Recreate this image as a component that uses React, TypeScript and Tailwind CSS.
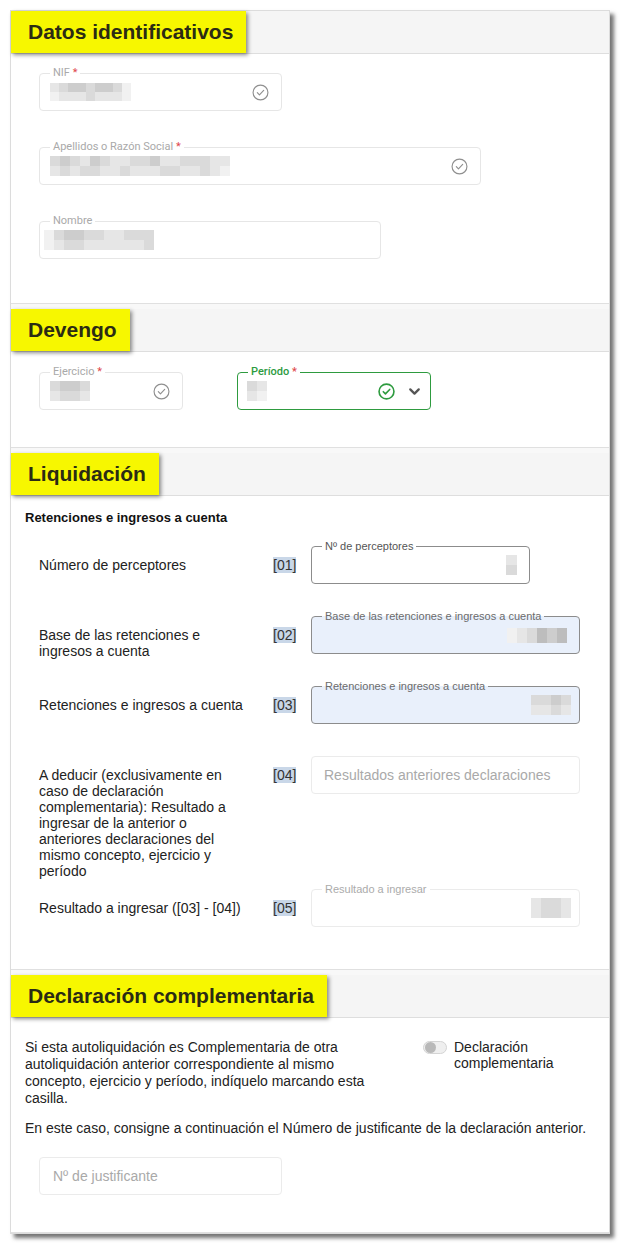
import { ChevronDown } from "lucide-react";
import type { ReactNode } from "react";

type Tone = "muted" | "dark" | "blue" | "faint" | "green";

const toneBox: Record<Tone, string> = {
  muted: "border border-[#e6e6e6] bg-white",
  dark: "border border-[#8c8c8c] bg-white",
  blue: "border border-[#8c8c8c] bg-[#e9f0fb]",
  faint: "border border-[#ebebeb] bg-white",
  green: "border-[1.5px] border-[#2e9b3f] bg-white",
};

const toneLabel: Record<Tone, string> = {
  muted: "text-[#a9a9a9] bg-white font-['Roboto',sans-serif]",
  dark: "text-[#555555] bg-white",
  blue: "text-[#6b6b6b] bg-[linear-gradient(to_bottom,#ffffff_50%,#e9f0fb_50%)]",
  faint: "text-[#ababab] bg-white",
  green: "text-[#2e9b3f] bg-white font-medium font-['Roboto',sans-serif]",
};

const shade: Record<string, string> = {
  "0": "bg-transparent",
  "1": "bg-[#f1f1f1]",
  "2": "bg-[#e6e6e6]",
  "3": "bg-[#dadada]",
  "4": "bg-[#cdcdcd]",
  "5": "bg-[#bdbdbd]",
};

// blurred (pixelated) values from the screenshot
function Pixels({ rows, cell }: { rows: string[]; cell: string }) {
  return (
    <div className="flex flex-col">
      {rows.map((r, i) => (
        <div key={i} className="flex">
          {r.split("").map((c, j) => (
            <div key={j} className={`${cell} ${shade[c]}`} />
          ))}
        </div>
      ))}
    </div>
  );
}

function CheckCircle({ green }: { green?: boolean }) {
  return (
    <svg
      width="17"
      height="17"
      viewBox="0 0 24 24"
      fill="none"
      stroke={green ? "#2e9b3f" : "#8f8f8f"}
      strokeWidth={green ? 2.3 : 1.6}
      strokeLinecap="round"
      strokeLinejoin="round"
    >
      <circle cx="12" cy="12" r="10.5" />
      <path d="M7.5 12.3l3 3 6-6.2" />
    </svg>
  );
}

function Field({
  label,
  req,
  tone,
  className,
  inner = "px-[10px]",
  children,
}: {
  label?: string;
  req?: boolean;
  tone: Tone;
  className: string;
  inner?: string;
  children?: ReactNode;
}) {
  return (
    <div className={`relative h-[38px] rounded-[4px] ${toneBox[tone]} ${className}`}>
      {label && (
        <span
          className={`absolute left-[10px] top-[-7px] whitespace-nowrap px-[3px] text-[11px] leading-[12px] ${toneLabel[tone]}`}
        >
          {label}
          {req && <span className="text-[#e0474c]"> *</span>}
        </span>
      )}
      <div className={`flex h-full items-center ${inner}`}>{children}</div>
    </div>
  );
}

function Section({ title, children }: { title: string; children: ReactNode }) {
  return (
    <section className="border-b border-[#e0e0e0] bg-white">
      <header className="flex h-[43px] border-b border-[#dedede] bg-[#f5f5f5]">
        <div className="flex h-[42px] items-center bg-[#f7f700] pl-[17px] pr-[13px] text-[21px] font-bold text-[#2b2b14] shadow-[2px_2px_4px_rgba(0,0,0,0.45)]">
          {title}
        </div>
      </header>
      {children}
    </section>
  );
}

function Row({ label, code, children }: { label: ReactNode; code: string; children: ReactNode }) {
  return (
    <div className="flex items-start">
      <div className="w-[208px] pb-[10px] pt-[11px] text-[14px] leading-[16px] text-[#222]">{label}</div>
      <div className="ml-[26px] w-[38px] pt-[11px] text-[14px] leading-[16px]">
        <span className="bg-[#c9d7e8] text-[#333]">[{code}]</span>
      </div>
      <div className="mb-[32px]">{children}</div>
    </div>
  );
}

export default function App() {
  return (
    <div className="min-h-[1243px] bg-white pl-[10px] pt-[10px] font-['Liberation_Sans',Arial,sans-serif]">
      <div className="flex w-[600px] flex-col gap-[5px] border border-[#dcdcdc] bg-[#f8f8f8] shadow-[4px_4px_4px_rgba(0,0,0,0.55)]">
        <Section title="Datos identificativos">
          <div className="flex flex-col gap-[36px] pb-[44px] pl-[28px] pt-[19px]">
            <Field label="NIF" req tone="muted" className="w-[243px]">
              <Pixels rows={["234434431", "122232221"]} cell="w-[9px] h-[9px]" />
              <div className="ml-auto mr-[2px]">
                <CheckCircle />
              </div>
            </Field>
            <Field label="Apellidos o Razón Social" req tone="muted" className="w-[442px]">
              <Pixels rows={["343243223342233322", "232332232223322321"]} cell="w-[10px] h-[10px]" />
              <div className="ml-auto mr-[2px]">
                <CheckCircle />
              </div>
            </Field>
            <Field label="Nombre" tone="muted" className="w-[342px]" inner="px-[4px]">
              <Pixels rows={["13443322333", "12332222223"]} cell="w-[10px] h-[10px]" />
            </Field>
          </div>
        </Section>

        <Section title="Devengo">
          <div className="flex pb-[37px] pl-[28px] pt-[20px]">
            <Field label="Ejercicio" req tone="muted" className="w-[144px]">
              <Pixels rows={["3443", "2332"]} cell="w-[10px] h-[10px]" />
              <div className="ml-auto mr-[2px]">
                <CheckCircle />
              </div>
            </Field>
            <Field label="Período" req tone="green" className="ml-[54px] w-[194px]" inner="pl-[9px] pr-[7px]">
              <Pixels rows={["32", "21"]} cell="w-[10px] h-[10px]" />
              <div className="ml-auto">
                <CheckCircle green />
              </div>
              <ChevronDown size={17} strokeWidth={3.2} className="ml-[11px] text-[#555]" />
            </Field>
          </div>
        </Section>

        <Section title="Liquidación">
          <div className="pb-[10px] pl-[14px] pt-[14px]">
            <h4 className="text-[13px] font-bold leading-[16px] text-[#111]">Retenciones e ingresos a cuenta</h4>
            <div className="ml-[14px] mt-[20px] flex flex-col">
              <Row label="Número de perceptores" code="01">
                <Field label="Nº de perceptores" tone="dark" className="w-[219px]" inner="justify-end pr-[12px]">
                  <Pixels rows={["2", "3"]} cell="w-[11px] h-[10px]" />
                </Field>
              </Row>
              <Row label="Base de las retenciones e ingresos a cuenta" code="02">
                <Field
                  label="Base de las retenciones e ingresos a cuenta"
                  tone="blue"
                  className="w-[269px]"
                  inner="justify-end pr-[12px]"
                >
                  <Pixels rows={["123545"]} cell="w-[10px] h-[15px]" />
                </Field>
              </Row>
              <Row label="Retenciones e ingresos a cuenta" code="03">
                <Field label="Retenciones e ingresos a cuenta" tone="blue" className="w-[269px]" inner="justify-end pr-[8px]">
                  <Pixels rows={["3343", "2232"]} cell="w-[10px] h-[10px]" />
                </Field>
              </Row>
              <Row
                label="A deducir (exclusivamente en caso de declaración complementaria): Resultado a ingresar de la anterior o anteriores declaraciones del mismo concepto, ejercicio y período"
                code="04"
              >
                <Field tone="faint" className="w-[269px]" inner="px-[12px]">
                  <span className="text-[14px] text-[#a9a9a9]">Resultados anteriores declaraciones</span>
                </Field>
              </Row>
              <Row label="Resultado a ingresar ([03] - [04])" code="05">
                <Field label="Resultado a ingresar" tone="faint" className="w-[269px]" inner="justify-end pr-[8px]">
                  <Pixels rows={["2332", "2332"]} cell="w-[10px] h-[10px]" />
                </Field>
              </Row>
            </div>
          </div>
        </Section>

        <Section title="Declaración complementaria">
          <div className="px-[14px] pb-[37px] pt-[21px] text-[14px] text-[#222]">
            <div className="flex items-start">
              <p className="w-[350px] leading-[17px]">
                Si esta autoliquidación es Complementaria de otra autoliquidación anterior correspondiente al mismo
                concepto, ejercicio y período, indíquelo marcando esta casilla.
              </p>
              <div className="ml-[48px] flex items-start gap-[7px]">
                <div className="mt-[2px] flex h-[13px] w-[24px] items-center rounded-full border border-[#d4d4d4] bg-[#efefef] px-[1px]">
                  <div className="h-[11px] w-[11px] rounded-full bg-[#b9b9b9]" />
                </div>
                <span className="leading-[16px]">
                  Declaración
                  <br />
                  complementaria
                </span>
              </div>
            </div>
            <p className="mt-[13px] leading-[17px]">
              En este caso, consigne a continuación el Número de justificante de la declaración anterior.
            </p>
            <div className="ml-[14px] mt-[20px]">
              <Field tone="faint" className="w-[243px]" inner="px-[13px]">
                <span className="text-[14px] text-[#a9a9a9]">Nº de justificante</span>
              </Field>
            </div>
          </div>
        </Section>
      </div>
    </div>
  );
}
